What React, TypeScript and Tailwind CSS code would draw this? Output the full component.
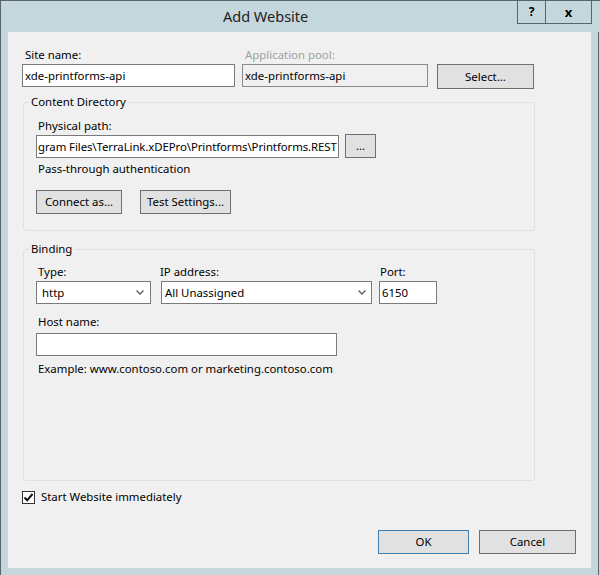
import React from 'react';

const Chevron = () => (
  <svg width="8" height="5" viewBox="0 0 8 5" className="shrink-0">
    <polyline points="0.5,0.5 4,4 7.5,0.5" fill="none" stroke="#606060" strokeWidth="1.4" />
  </svg>
);

const Btn = ({ w, children, primary }: { w: string; children: React.ReactNode; primary?: boolean }) => (
  <div
    className={`${w} h-[24px] flex items-center justify-center bg-[#e1e1e1] border ${
      primary ? 'border-[#3c7fb1]' : 'border-[#707070]'
    } text-black`}
  >
    {children}
  </div>
);

export default function App() {
  return (
    <div className="w-[600px] h-[575px] bg-[#c4d7dd] border-l border-t border-[#5b646e] flex flex-col font-['Noto_Sans',sans-serif] text-[11.4px] leading-[16px] text-black overflow-hidden">
      {/* title bar */}
      <div className="h-[31px] flex items-start">
        <div className="pl-[222px] pt-[6px] text-[14.5px] leading-[18px] text-[#222]">Add Website</div>
        <div className="ml-auto mr-[8px] flex">
          <div className="w-[29px] h-[23px] border border-[#5b646e] border-t-0 flex items-center justify-center font-bold text-[12px]">?</div>
          <div className="w-[46px] h-[23px] border border-[#5b646e] border-t-0 border-l-0 flex items-center justify-center font-bold text-[13px]">x</div>
        </div>
      </div>

      <div className="flex flex-1">
        {/* dialog panel */}
        <div className="ml-[7px] w-[583px] h-[536px] bg-[#f0f0f0] pl-[14px] flex flex-col">
          {/* site name / app pool */}
          <div className="mt-[15px] flex">
            <div className="w-[220px] pl-[3px]">Site name:</div>
            <div className="pl-[3px] text-[#a0a0a0]">Application pool:</div>
          </div>
          <div className="mt-[1px] flex items-start">
            <div className="w-[213px] h-[23px] border border-[#7a7a7a] bg-white pl-[2px] flex items-center">xde-printforms-api</div>
            <div className="ml-[7px] w-[186px] h-[23px] border border-[#8a8a8a] bg-[#f0f0f0] pl-[2px] flex items-center">xde-printforms-api</div>
            <div className="ml-[9px]">
              <div className="w-[97px] h-[25px] flex items-center justify-center bg-[#e1e1e1] border border-[#707070]">Select...</div>
            </div>
          </div>

          {/* content directory */}
          <fieldset className="mt-[5px] ml-[1px] w-[512px] border border-[#dde1e6] rounded-[3px] pb-[16px]">
            <legend className="ml-[5px] px-[2px]">Content Directory</legend>
            <div className="pl-[12px]">
              <div className="mt-[8px] pl-[2px]">Physical path:</div>
              <div className="mt-[1px] flex items-start">
                <div className="w-[303px] h-[23px] border border-[#7a7a7a] bg-white pl-[1px] flex items-center overflow-hidden whitespace-nowrap tracking-[-0.08px]">
                  gram Files\TerraLink.xDEPro\Printforms\Printforms.REST
                </div>
                <div className="ml-[6px] -mt-[1px]">
                  <Btn w="w-[31px]">...</Btn>
                </div>
              </div>
              <div className="mt-[3px] pl-[2px]">Pass-through authentication</div>
              <div className="mt-[13px] flex gap-[18px]">
                <Btn w="w-[86px]">Connect as...</Btn>
                <Btn w="w-[91px]">Test Settings...</Btn>
              </div>
            </div>
          </fieldset>

          {/* binding */}
          <fieldset className="mt-[10px] ml-[1px] w-[512px] border border-[#dde1e6] rounded-[3px] pb-[103px]">
            <legend className="ml-[5px] px-[2px]">Binding</legend>
            <div className="pl-[12px]">
              <div className="mt-[7px] flex">
                <div className="w-[123px] pl-[2px]">Type:</div>
                <div className="w-[219px] pl-[1px]">IP address:</div>
                <div className="pl-[2px]">Port:</div>
              </div>
              <div className="mt-[1px] flex">
                <div className="w-[115px] h-[23px] border border-[#7a7a7a] bg-white pl-[5px] pr-[6px] flex items-center justify-between">
                  <span>http</span>
                  <Chevron />
                </div>
                <div className="ml-[10px] w-[211px] h-[23px] border border-[#7a7a7a] bg-white pl-[3px] pr-[5px] flex items-center justify-between">
                  <span>All Unassigned</span>
                  <Chevron />
                </div>
                <div className="ml-[7px] w-[58px] h-[23px] border border-[#7a7a7a] bg-white pl-[2px] flex items-center">6150</div>
              </div>
              <div className="mt-[10px] pl-[2px]">Host name:</div>
              <div className="mt-[3px] w-[301px] h-[23px] border border-[#7a7a7a] bg-white" />
              <div className="mt-[5px] pl-[2px]">Example: www.contoso.com or marketing.contoso.com</div>
            </div>
          </fieldset>

          {/* start immediately */}
          <div className="mt-[8px] flex items-center">
            <div className="w-[13px] h-[13px] border border-[#333] bg-white flex items-center justify-center">
              <svg width="11" height="11" viewBox="0 0 11 11">
                <path d="M1.5 5.5 L4.2 8.3 L9.5 2" fill="none" stroke="#111" strokeWidth="2" />
              </svg>
            </div>
            <span className="ml-[6px]">Start Website immediately</span>
          </div>

          {/* ok / cancel */}
          <div className="mt-auto mb-[14px] pr-[15px] flex justify-end gap-[10px]">
            <Btn w="w-[91px]" primary>OK</Btn>
            <Btn w="w-[97px]">Cancel</Btn>
          </div>
        </div>
        <div className="ml-[7px] w-[1px] bg-[#5b646e]" />
      </div>
    </div>
  );
}
